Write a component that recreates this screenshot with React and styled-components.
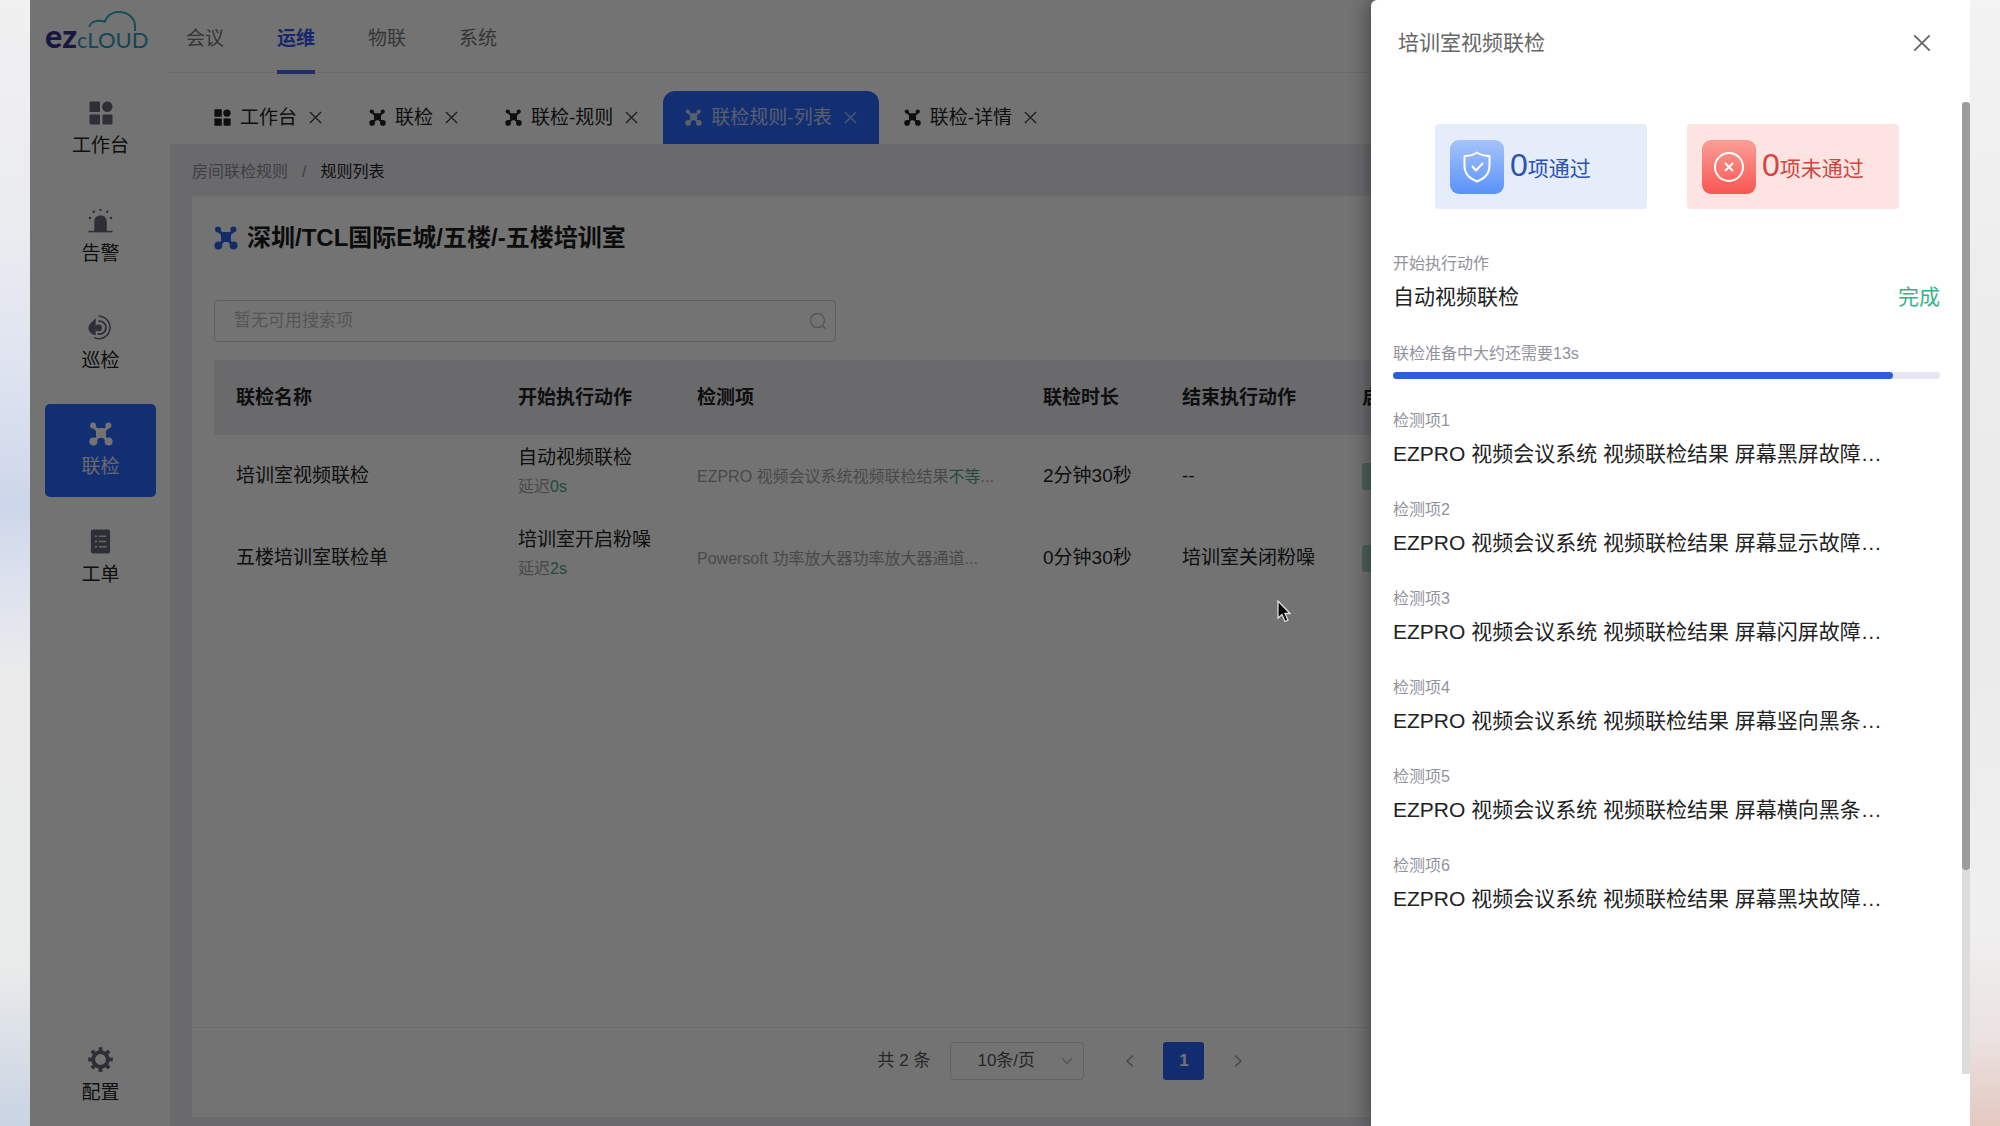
import React from "react";
import styled, { createGlobalStyle } from "styled-components";

const GlobalStyle = createGlobalStyle`
  *, *::before, *::after { box-sizing: border-box; }
  body {
    margin: 0;
    background: #ededf0;
    font-family: "Liberation Sans", "Noto Sans CJK SC", sans-serif;
    font-size: 19px;
    line-height: 28px;
    color: #222;
  }
  button, input, select { font: inherit; color: inherit; margin: 0; }
  button { padding: 0; border: 0; background: none; cursor: pointer; }
  a { color: inherit; text-decoration: none; }
  ul, ol, h1, h2, p, dl, dd { margin: 0; padding: 0; list-style: none; }
  svg { display: block; flex: none; }
`;

/* ---------- frame ---------- */

const Desktop = styled.div`
  min-height: 100vh;
  display: grid;
  grid-template-columns: 30px minmax(0, 1fr) 30px;
`;

const Wallpaper = styled.div`
  background: ${(p) =>
    p.$side === "left"
      ? "linear-gradient(180deg, #f0f0f1 0%, #ebecf0 20%, #dfe4f0 32%, #cdd6ea 45%, #dde2ee 52%, #ebebeb 60%, #e9ebeb 86%, #c9d3e2 100%)"
      : "linear-gradient(180deg, #f3f3f3 0%, #ececec 30%, #eaeaea 55%, #f0f0f1 82%, #ebe2e1 92%, #e4c9c1 100%)"};
`;

const AppFrame = styled.div`
  position: relative;
  overflow: hidden;
  background: #fff;
  display: grid;
  grid-template-columns: 140px minmax(0, 1fr);
  grid-template-rows: 73px minmax(0, 1fr);
`;

const Mask = styled.div`
  position: absolute;
  inset: 0;
  background: rgba(0, 0, 0, 0.55);
`;

/* ---------- header ---------- */

const LogoLink = styled.a`
  position: relative;
  align-self: start;
  display: flex;
  align-items: baseline;
  height: 48px;
  margin-left: 15px;
  padding-top: 20px;
  line-height: 32px;
  font-family: Lato, "Liberation Sans", sans-serif;
`;

const LogoDark = styled.span`
  font-size: 32px;
  font-weight: 900;
  color: #35348c;
`;

const LogoLight = styled.span`
  font-size: 22px;
  color: #2c9cc0;
`;

const CloudArt = styled.svg`
  position: absolute;
  left: 42px;
  top: 10px;
`;

const TopNav = styled.nav`
  display: flex;
  gap: 53px;
  padding-left: 16px;
  border-bottom: 1px solid #ebebee;
`;

const TopLink = styled.a`
  display: flex;
  align-items: center;
  height: 74px;
  padding-top: 3px;
  color: ${(p) => (p.$active ? "#3357e8" : "#777")};
  font-weight: ${(p) => (p.$active ? 700 : 400)};
  box-shadow: ${(p) => (p.$active ? "inset 0 -4px #4a66e0" : "none")};
`;

/* ---------- sidebar ---------- */

const Sidebar = styled.nav`
  display: flex;
  flex-direction: column;
  gap: 14px;
  padding: 10px 14px 4px 15px;
`;

const SideLink = styled.a`
  display: flex;
  flex-direction: column;
  align-items: center;
  gap: 7px;
  height: 93px;
  padding-top: 18px;
  border-radius: 5px;
  background: ${(p) => (p.$active ? "#2c68ff" : "transparent")};
  color: ${(p) => (p.$active ? "#e4e9f5" : "#222")};
  margin-top: ${(p) => (p.$last ? "auto" : 0)};
  svg { color: ${(p) => (p.$active ? "#fff" : "#66667a")}; }
`;

/* ---------- workspace ---------- */

const Workspace = styled.main`
  display: flex;
  flex-direction: column;
  min-width: 0;
`;

const Tabs = styled.ul`
  display: flex;
  align-items: flex-end;
  gap: 3px;
  height: 72px;
  padding-left: 22px;
  border-bottom: 1px solid #e6e6ea;
`;

const Tab = styled.li`
  display: flex;
  align-items: center;
  height: 53px;
  padding: 0 22px;
  border-radius: 12px 12px 0 0;
  background: ${(p) => (p.$active ? "#2c68ff" : "transparent")};
  color: ${(p) => (p.$active ? "#c5d2f2" : "#222")};
`;

const TabLink = styled.a`
  display: flex;
  align-items: center;
  gap: 9px;
`;

const TabClose = styled.button`
  margin-left: 12px;
  opacity: 0.85;
`;

const Canvas = styled.div`
  flex: 1;
  display: flex;
  flex-direction: column;
  padding: 12px 26px 9px 22px;
  background: #ebebf2;
`;

const Breadcrumb = styled.ol`
  display: flex;
  gap: 14px;
  margin-bottom: 9px;
  font-size: 16px;
  line-height: 30px;
  color: #8d8d94;
`;

const Current = styled.li`
  color: #222;
`;

const Card = styled.section`
  flex: 1;
  display: flex;
  flex-direction: column;
  padding: 22px 22px 0;
  background: #fff;
`;

const CardTitle = styled.h1`
  display: flex;
  align-items: center;
  gap: 9px;
  margin-bottom: 42px;
  font-size: 24px;
  line-height: 40px;
  font-weight: 700;
  color: #1c1c1c;
  svg { color: #2c62e6; }
`;

const SearchBox = styled.label`
  display: flex;
  align-items: center;
  width: 622px;
  height: 42px;
  padding: 0 8px 0 19px;
  margin-bottom: 18px;
  border: 1px solid #d3d3d9;
  border-radius: 4px;
  color: #bcbcc2;
`;

const SearchInput = styled.input`
  flex: 1;
  min-width: 0;
  border: 0;
  outline: 0;
  padding: 0;
  background: none;
  font-size: 17px;
  &::placeholder { color: #bcbcc2; opacity: 1; }
`;

const Table = styled.table`
  width: 100%;
  table-layout: fixed;
  border-collapse: collapse;
  text-align: left;
`;

const HeadCell = styled.th`
  width: ${(p) => (p.$width ? `${p.$width}px` : "auto")};
  height: 75px;
  padding: 0 0 0 22px;
  background: #ebebf2;
  font-weight: 700;
`;

const Cell = styled.td`
  height: 82px;
  padding: 0 0 ${(p) => (p.$stacked ? 6 : 0)}px 22px;
  white-space: nowrap;
`;

const Delay = styled.p`
  font-size: 16px;
  line-height: 30px;
  color: #a3a3a8;
`;

const Green = styled.span`
  color: #4da585;
`;

const Summary = styled.span`
  font-size: 16px;
  color: #a3a3a8;
`;

const Tag = styled.span`
  display: block;
  width: 60px;
  height: 27px;
  border-radius: 3px;
  background: #a9dcc9;
`;

const Pager = styled.footer`
  display: flex;
  align-items: center;
  justify-content: center;
  height: 90px;
  margin: auto -22px 0;
  padding-bottom: 24px;
  border-top: 1px solid #eeeef1;
  font-size: 17px;
  color: #555;
`;

const PageSize = styled.span`
  display: flex;
  align-items: center;
  width: 134px;
  height: 38px;
  margin: 0 25px 0 20px;
  padding-right: 10px;
  border: 1px solid #d9d9de;
  border-radius: 4px;
  svg { color: #b0b0b6; }
`;

const SizeSelect = styled.select`
  flex: 1;
  appearance: none;
  border: 0;
  outline: 0;
  padding: 0 0 0 26px;
  background: none;
`;

const PageButton = styled.button`
  display: grid;
  place-items: center;
  width: 41px;
  height: 38px;
  border-radius: 3px;
  background: ${(p) => (p.$active ? "#2c62f5" : "transparent")};
  color: ${(p) => (p.$active ? "#fff" : "#a0a0a6")};
  font-weight: 700;
  & + & { margin-left: 13px; }
`;

/* ---------- drawer ---------- */

const Drawer = styled.aside`
  position: absolute;
  inset: 0 0 0 auto;
  width: 599px;
  display: flex;
  flex-direction: column;
  padding-bottom: 52px;
  border-radius: 6px 0 0 0;
  background: #fff;
  box-shadow: -4px 0 18px rgba(0, 0, 0, 0.35);
  font-size: 21px;
  line-height: 30px;
`;

const DrawerHeader = styled.header`
  display: flex;
  align-items: center;
  justify-content: space-between;
  height: 102px;
  padding: 0 39px 17px 27px;
  color: #666;
`;

const DrawerTitle = styled.h2`
  font-size: 21px;
  font-weight: 400;
`;

const DrawerBody = styled.div`
  flex: 1;
  display: flex;
`;

const DrawerContent = styled.div`
  flex: 1;
  min-width: 0;
  padding: 22px 22px 0;
`;

const ScrollTrack = styled.div`
  width: 8px;
  background: #dcdcdc;
`;

const ScrollThumb = styled.div`
  height: 79%;
  border-radius: 4px;
  background: #9c9c9c;
`;

const Stats = styled.div`
  display: grid;
  grid-template-columns: 1fr 1fr;
  gap: 40px;
  margin: 0 41px 40px 42px;
`;

const Stat = styled.div`
  display: flex;
  align-items: center;
  gap: 6px;
  height: 85px;
  padding-left: 15px;
  border-radius: 4px;
  background: ${(p) => (p.$bad ? "#fde4e3" : "#e5edfb")};
  color: ${(p) => (p.$bad ? "#d2463f" : "#2b52b4")};
`;

const StatBadge = styled.span`
  display: grid;
  place-items: center;
  width: 54px;
  height: 54px;
  border-radius: 9px;
  color: #fff;
  background: ${(p) =>
    p.$bad
      ? "linear-gradient(180deg, #fa9d97, #fa5752)"
      : "linear-gradient(180deg, #a5c3fb, #5a92fa)"};
`;

const StatText = styled.p`
  display: flex;
  align-items: baseline;
`;

const StatNumber = styled.span`
  font-size: 32px;
`;

const Step = styled.section`
  margin-bottom: 27px;
`;

const StepLabel = styled.p`
  font-size: 16px;
  line-height: 30px;
  color: #92929c;
`;

const StepRow = styled.div`
  display: flex;
  justify-content: space-between;
  padding-top: 3px;
  line-height: 30px;
  white-space: nowrap;
`;

const Done = styled.span`
  color: #37b487;
`;

const Check = styled.li`
  margin-bottom: 26px;
`;

const Progress = styled.div`
  height: 7px;
  margin: 3px 0 27px;
  border-radius: 4px;
  background: #e8e6f2;
`;

const ProgressFill = styled.div`
  height: 100%;
  border-radius: 4px;
  background: #2a5fd8;
`;

const Pointer = styled.svg`
  position: absolute;
  left: 1247px;
  top: 600px;
`;

/* ---------- icons ---------- */

const NodesIcon = ({ size = 17 }) => (
  <svg width={size} height={size} viewBox="0 0 24 24" fill="currentColor" aria-hidden="true">
    <path d="M4 4 20 20M20 4 4 20" stroke="currentColor" strokeWidth="3" />
    <rect x="7" y="6" width="10" height="10" rx="2.500" />
    <circle cx="4" cy="3.600" r="3" />
    <circle cx="19.400" cy="3.600" r="3" />
    <circle cx="4.400" cy="19.600" r="4" />
    <circle cx="19.600" cy="19.600" r="4" />
  </svg>
);

const GridIcon = ({ size = 17 }) => (
  <svg width={size} height={size} viewBox="0 0 24 24" fill="currentColor" aria-hidden="true">
    <rect x="0.500" y="0.500" width="10.500" height="10.500" rx="1" />
    <circle cx="18.300" cy="5.800" r="5.200" />
    <rect x="0.500" y="13.500" width="10.500" height="10" rx="1" />
    <rect x="13.500" y="13.500" width="10" height="10" rx="1" />
  </svg>
);

const AlarmIcon = () => (
  <svg width="25" height="25" viewBox="0 0 26 26" fill="currentColor" aria-hidden="true">
    <path d="M6.500 24V14a6.500 6.500 0 0 1 13 0v10z" />
    <path d="M0.500 24.500h25" stroke="currentColor" strokeWidth="1.600" />
    <g>
      <circle cx="13" cy="2" r="1.200" />
      <circle cx="6" cy="4" r="1.300" />
      <circle cx="20" cy="4" r="1.300" />
      <circle cx="2" cy="10.500" r="1.300" />
      <circle cx="24" cy="10.500" r="1.300" />
    </g>
  </svg>
);

const PatrolIcon = () => (
  <svg width="25" height="25" viewBox="0 0 26 26" fill="none" stroke="currentColor" aria-hidden="true">
    <path d="M8 3v18C4 20.500 0.500 17.500 0.500 13.500c0-3 1.500-5 3.500-6z" fill="currentColor" stroke="none" />
    <path d="M11 1.300a11.700 11.700 0 1 1-4.500 22.400" strokeWidth="1.600" />
    <path d="M11 6.500a6.700 6.700 0 1 1-1 13" strokeWidth="2" />
    <circle cx="11" cy="13.500" r="3.500" fill="currentColor" stroke="none" />
  </svg>
);

const OrderIcon = () => (
  <svg width="23" height="25" viewBox="0 0 24 26" aria-hidden="true">
    <rect x="2" y="0.500" width="20" height="25" rx="2" fill="currentColor" />
    <path d="M6 7.500h2.500M6 13h2.500M6 18.500h2.500M10.500 7.500H18M10.500 13H18M10.500 18.500H18" stroke="#e4e4ea" strokeWidth="1.600" />
  </svg>
);

const GearIcon = () => (
  <svg width="25" height="25" viewBox="-13 -13 26 26" fill="none" stroke="currentColor" aria-hidden="true">
    <circle r="7.600" strokeWidth="4" />
    {[0, 45, 90, 135, 180, 225, 270, 315].map((a) => (
      <path key={a} d="M0-8.500V-12.800" strokeWidth="4" transform={`rotate(${a})`} />
    ))}
  </svg>
);

const CloseIcon = ({ size = 13 }) => (
  <svg width={size} height={size} viewBox="0 0 14 14" fill="none" stroke="currentColor" strokeWidth="1.400" aria-hidden="true">
    <path d="M1 1 13 13M13 1 1 13" />
  </svg>
);

const SearchIcon = () => (
  <svg width="18" height="18" viewBox="0 0 18 18" fill="none" stroke="currentColor" strokeWidth="1.400" aria-hidden="true">
    <circle cx="8.500" cy="8.500" r="7" />
    <path d="m13.500 13.500 3.500 3.500" />
  </svg>
);

const Chevron = ({ turn = 0, size = 14 }) => (
  <svg width={size} height={size} viewBox="0 0 14 14" fill="none" stroke="currentColor" strokeWidth="1.500" aria-hidden="true">
    <path d="m4 1.500 6 5.500-6 5.500" transform={`rotate(${turn} 7 7)`} />
  </svg>
);

const ShieldIcon = () => (
  <svg width="30" height="32" viewBox="0 0 30 32" fill="none" stroke="currentColor" strokeWidth="2" strokeLinejoin="round" aria-hidden="true">
    <path d="M15 1.500c3.500 2.500 7.500 3.500 12.500 3.500v10c0 7.500-5 12.500-12.500 15.500C7.500 27.500 2.500 22.500 2.500 15V5C7.500 5 11.500 4 15 1.500z" />
    <path d="m10 15 4 4.500 7-7.500" />
  </svg>
);

const FailIcon = () => (
  <svg width="32" height="32" viewBox="0 0 32 32" fill="none" stroke="currentColor" strokeWidth="2" aria-hidden="true">
    <circle cx="16" cy="16" r="14" />
    <path d="m12 12 8 8m0-8-8 8" />
  </svg>
);

/* ---------- data ---------- */

const topLinks = ["会议", "运维", "物联", "系统"];

const sideLinks = [
  { label: "工作台", icon: <GridIcon size={24} /> },
  { label: "告警", icon: <AlarmIcon /> },
  { label: "巡检", icon: <PatrolIcon /> },
  { label: "联检", icon: <NodesIcon size={24} />, active: true },
  { label: "工单", icon: <OrderIcon /> },
  { label: "配置", icon: <GearIcon />, last: true },
];

const tabs = ["工作台", "联检", "联检-规则", "联检规则-列表", "联检-详情"];

const columns = [
  ["联检名称", 282],
  ["开始执行动作", 179],
  ["检测项", 346],
  ["联检时长", 139],
  ["结束执行动作", 180],
  ["启用", null],
];

const rules = [
  {
    name: "培训室视频联检",
    start: "自动视频联检",
    delay: "0s",
    items: <>EZPRO 视频会议系统视频联检结果<Green>不等</Green>...</>,
    time: "2分钟30秒",
    end: "--",
  },
  {
    name: "五楼培训室联检单",
    start: "培训室开启粉噪",
    delay: "2s",
    items: "Powersoft 功率放大器功率放大器通道...",
    time: "0分钟30秒",
    end: "培训室关闭粉噪",
  },
];

const checks = ["屏幕黑屏故障", "屏幕显示故障", "屏幕闪屏故障", "屏幕竖向黑条", "屏幕横向黑条", "屏幕黑块故障"];

const progress = 91.4;

export default function App() {
  return (
    <>
      <GlobalStyle />
      <Desktop>
        <Wallpaper $side="left" />
        <AppFrame>
          <LogoLink href="#">
            <LogoDark>ez</LogoDark>
            <LogoLight>cLOUD</LogoLight>
            <CloudArt width="54" height="34" viewBox="0 0 54 34" fill="none" stroke="#2fb0c0" strokeWidth="2" aria-hidden="true">
              <path d="M2.500 17C3 12 9 9.500 18 11.500 20 5 26 2 32 2 41 2 48 8 48 16v5" />
            </CloudArt>
          </LogoLink>
          <TopNav>
            {topLinks.map((t) => (
              <TopLink key={t} href="#" $active={t === "运维"}>{t}</TopLink>
            ))}
          </TopNav>

          <Sidebar>
            {sideLinks.map((s) => (
              <SideLink key={s.label} href="#" $active={s.active} $last={s.last}>
                {s.icon}
                {s.label}
              </SideLink>
            ))}
          </Sidebar>

          <Workspace>
            <Tabs>
              {tabs.map((t, i) => (
                <Tab key={t} $active={i === 3}>
                  <TabLink href="#">
                    {i === 0 ? <GridIcon /> : <NodesIcon />}
                    {t}
                  </TabLink>
                  <TabClose aria-label="关闭"><CloseIcon /></TabClose>
                </Tab>
              ))}
            </Tabs>
            <Canvas>
              <Breadcrumb>
                <li><a href="#">房间联检规则</a></li>
                <li>/</li>
                <Current>规则列表</Current>
              </Breadcrumb>
              <Card>
                <CardTitle>
                  <NodesIcon size={24} />
                  深圳/TCL国际E城/五楼/-五楼培训室
                </CardTitle>
                <SearchBox>
                  <SearchInput placeholder="暂无可用搜索项" />
                  <SearchIcon />
                </SearchBox>
                <Table>
                  <thead>
                    <tr>
                      {columns.map(([label, width]) => (
                        <HeadCell key={label} $width={width}>{label}</HeadCell>
                      ))}
                    </tr>
                  </thead>
                  <tbody>
                    {rules.map((r) => (
                      <tr key={r.name}>
                        <Cell>{r.name}</Cell>
                        <Cell $stacked>
                          {r.start}
                          <Delay>延迟<Green>{r.delay}</Green></Delay>
                        </Cell>
                        <Cell><Summary>{r.items}</Summary></Cell>
                        <Cell>{r.time}</Cell>
                        <Cell>{r.end}</Cell>
                        <Cell><Tag /></Cell>
                      </tr>
                    ))}
                  </tbody>
                </Table>
                <Pager>
                  <span>共 2 条</span>
                  <PageSize>
                    <SizeSelect aria-label="每页条数" defaultValue="10">
                      <option value="10">10条/页</option>
                    </SizeSelect>
                    <Chevron turn={90} size={12} />
                  </PageSize>
                  <PageButton aria-label="上一页"><Chevron turn={180} /></PageButton>
                  <PageButton $active>1</PageButton>
                  <PageButton aria-label="下一页"><Chevron /></PageButton>
                </Pager>
              </Card>
            </Canvas>
          </Workspace>

          <Mask />
          <Pointer width="14" height="23" viewBox="0 0 14 23" aria-hidden="true">
            <path d="M1 1v17l4-3.500 3 7 3-1.300-3-6.700h5z" fill="#000" stroke="#ddd" strokeWidth="1.300" />
          </Pointer>

          <Drawer role="dialog" aria-label="培训室视频联检">
            <DrawerHeader>
              <DrawerTitle>培训室视频联检</DrawerTitle>
              <button aria-label="关闭"><CloseIcon size={18} /></button>
            </DrawerHeader>
            <DrawerBody>
              <DrawerContent>
                <Stats>
                  <Stat>
                    <StatBadge><ShieldIcon /></StatBadge>
                    <StatText><StatNumber>0</StatNumber>项通过</StatText>
                  </Stat>
                  <Stat $bad>
                    <StatBadge $bad><FailIcon /></StatBadge>
                    <StatText><StatNumber>0</StatNumber>项未通过</StatText>
                  </Stat>
                </Stats>
                <Step>
                  <StepLabel>开始执行动作</StepLabel>
                  <StepRow><span>自动视频联检</span><Done>完成</Done></StepRow>
                </Step>
                <StepLabel>联检准备中大约还需要13s</StepLabel>
                <Progress role="progressbar" aria-valuenow={progress} aria-valuemin={0} aria-valuemax={100}>
                  <ProgressFill style={{ width: `${progress}%` }} />
                </Progress>
                <ul>
                  {checks.map((c, i) => (
                    <Check key={c}>
                      <StepLabel>检测项{i + 1}</StepLabel>
                      <StepRow>EZPRO 视频会议系统 视频联检结果 {c}…</StepRow>
                    </Check>
                  ))}
                </ul>
              </DrawerContent>
              <ScrollTrack><ScrollThumb /></ScrollTrack>
            </DrawerBody>
          </Drawer>
        </AppFrame>
        <Wallpaper $side="right" />
      </Desktop>
    </>
  );
}
